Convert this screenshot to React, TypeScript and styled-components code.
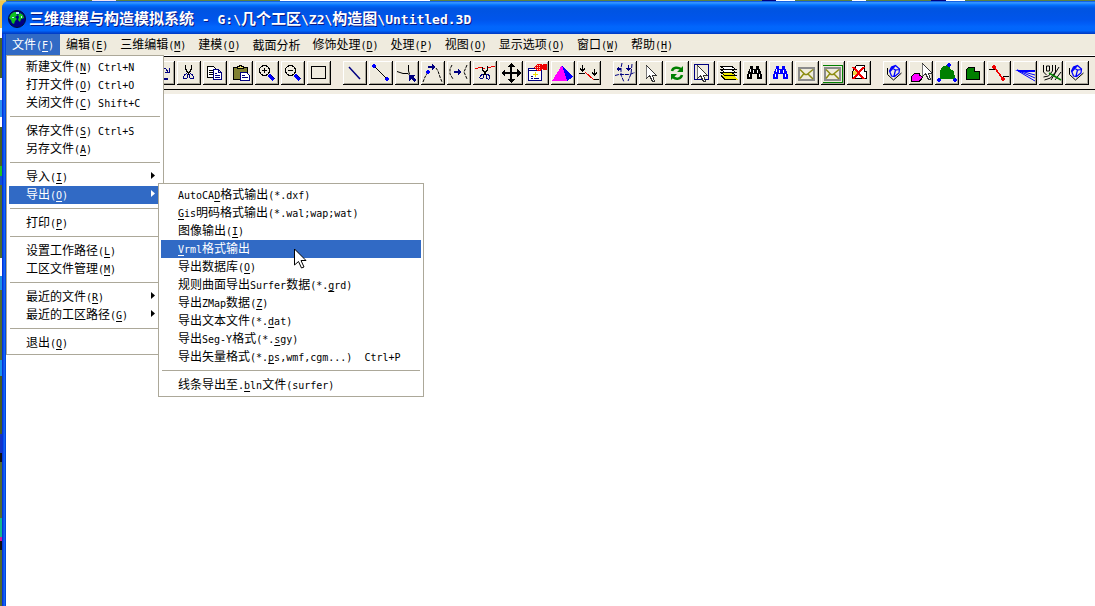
import React from "react";
import styled, { createGlobalStyle, css } from "styled-components";

const GlobalStyle = createGlobalStyle`
  * { box-sizing: border-box; }
  body {
    margin: 0;
    font-family: "Noto Sans CJK SC", sans-serif;
    font-size: 12px;
    line-height: 18px;
    color: #000;
  }
  button { font: inherit; color: inherit; margin: 0; }
`;

const FACE = "#efebde";
const SELECT = "#316ac5";

/* ---------- text ---------- */

const Latin = styled.span<{ $size: number }>`
  font-family: "DejaVu Sans Mono", "Liberation Mono", monospace;
  font-size: ${(p) => p.$size}px;
`;

const Key = styled.u`
  text-underline-offset: 2px;
  text-decoration-thickness: 1px;
`;

/* Half-width runs get a monospace face; "&" marks the access key. */
function Label({ text, size = 10 }: { text: string; size?: number }) {
  const runs = text.match(/[\x00-\x7f]+|[^\x00-\x7f]+/g) || [];
  return (
    <span>
      {runs.map((run, i) => {
        if (run.charCodeAt(0) > 127) return run;
        const at = run.indexOf("&");
        return (
          <Latin key={i} $size={size}>
            {at < 0 ? run : (
              <>
                {run.slice(0, at)}
                <Key>{run[at + 1]}</Key>
                {run.slice(at + 2)}
              </>
            )}
          </Latin>
        );
      })}
    </span>
  );
}

/* ---------- frame ---------- */

const Desktop = styled.div`
  min-height: 100vh;
  display: flex;
  padding: 1px 0 0 2px;
  overflow: hidden;
  background:
    linear-gradient(90deg, #e8d070 0 6px, #5c8040 6px 92px, #f4e4f0 92px 116px, #5c8040 116px 280px, #fff 280px 430px, #5c8040 430px 762px, #00007c 762px 776px, #fff 776px 795px, #5c8040 795px 852px, #fff 852px 866px, #5c8040 866px 931px, #00007c 931px 946px, #fff 946px 965px, #5c8040 965px) 0 0 / 100% 1px no-repeat,
    linear-gradient(#f0c850 0 28px, #fff 28px 38px, #4c6424 38px 78px, #e8f0ff 78px 100px, #2c90ee 100px 117px, #fff 117px 127px, #466020 127px 166px, #20c020 166px 176px, #1050d0 176px 185px, #4e6c2c 185px 258px, #fff 258px 276px, #2090e0 276px 290px, #526c2c 290px 360px, #1890e8 360px 376px, #465c20 376px 434px, #1434c4 434px 453px, #101010 453px 462px, #526c30 462px 518px, #10b890 518px 537px, #d01898 537px 541px, #101010 541px 550px, #526c2c 550px);
`;

const Window = styled.main`
  flex: 1;
  min-width: 0;
  display: flex;
  flex-direction: column;
  padding-left: 4px;
  border-top-left-radius: 7px;
  overflow: hidden;
  background: linear-gradient(90deg, #0831d9 0 1px, #0a50ea 1px 2px, #1464f4 2px 3px, #0048dc 3px 4px);
`;

const TitleBar = styled.header`
  height: 33px;
  margin-left: -4px;
  padding: 3px 0 0 6px;
  display: flex;
  align-items: center;
  gap: 3px;
  background: linear-gradient(#0046d8 0, #3593ff 4%, #288eff 7%, #127dff 10%, #036ffc 13%, #0262ee 17%, #0057e5 22%, #0054e3 30%, #0055eb 56%, #005bf5 66%, #0266fc 78%, #0066fc 90%, #0050e0 94%, #0038c0 100%);
`;

const Title = styled.h1`
  margin: 0;
  font-size: 15px;
  line-height: 20px;
  font-weight: 700;
  color: #fff;
  white-space: pre;
  text-shadow: 1px 1px 0 #0a1883;
`;

const MenuBar = styled.nav`
  height: 22px;
  display: flex;
  background: ${FACE};
  border-bottom: 1px solid #fff;
`;

const MenuSlot = styled.div`
  position: relative;
  display: flex;
`;

const MenuHead = styled.button<{ $open?: boolean }>`
  height: 21px;
  padding: 0 6px;
  border: 0;
  white-space: pre;
  background: ${(p) => (p.$open ? SELECT : "transparent")};
  color: ${(p) => (p.$open ? "#fff" : "#000")};
`;

const Popup = styled.div<{ $nested?: boolean }>`
  position: absolute;
  z-index: 2;
  padding: 2px;
  border: 1px solid #aca899;
  background: #fff;
  color: #000;
  ${(p) =>
    p.$nested
      ? css`
          top: -3px;
          left: 100%;
          margin-left: -3px;
          width: 266px;
        `
      : css`
          top: 21px;
          left: 0;
          width: 158px;
        `}
`;

const ItemSlot = styled.div`
  position: relative;
`;

const Item = styled.button<{ $active?: boolean }>`
  width: 100%;
  height: 18px;
  padding: 0 6px 0 17px;
  border: 0;
  display: flex;
  align-items: center;
  justify-content: space-between;
  white-space: pre;
  text-align: left;
  background: ${(p) => (p.$active ? SELECT : "transparent")};
  color: ${(p) => (p.$active ? "#fff" : "#000")};
`;

const SubArrow = styled.svg`
  margin-bottom: 3px;
`;

const Rule = styled.hr`
  height: 1px;
  margin: 4px 1px 5px;
  border: 0;
  background: #aca899;
`;

const ToolBar = styled.div`
  height: 34px;
  padding: 4px 0 0 5px;
  display: flex;
  gap: 12px;
  background: #f0eadf;
  border-top: 1px solid #000;
  border-bottom: 1px solid #000;
`;

const ToolGroup = styled.div`
  display: flex;
  gap: 2px;
`;

const Tool = styled.button`
  flex: none;
  width: 24px;
  height: 24px;
  padding: 0;
  border: 0;
  background: ${FACE};
  box-shadow: inset -1px -1px #000, inset 1px 1px #fff, inset -2px -2px #a8a498;
  svg { display: block; }
`;

const Canvas = styled.section`
  flex: 1;
  border-top: 4px solid #f2eee4;
  background: #fff;
`;

const Pointer = styled.svg`
  position: absolute;
  left: 135px;
  top: 64px;
  z-index: 3;
  pointer-events: none;
`;

/* ---------- icons ---------- */

const B = "#000";
const N = "#000080";
const U = "#0000ff";
const R = "#f00000";
const G = "#008000";

const L = ({ d, c = B, w = 1, f = "none", dash }: { d: string; c?: string; w?: number; f?: string; dash?: string }) => (
  <path d={d} stroke={c} strokeWidth={w} fill={f} strokeDasharray={dash} />
);
const F = ({ d, c = B }: { d: string; c?: string }) => <path d={d} fill={c} />;
const Dot = ({ x, y, c = U }: { x: number; y: number; c?: string }) => (
  <F c={c} d={`M${x - 1} ${y - 2}h2v1h1v2h-1v1h-2v-1h-1v-2h1z`} />
);
const Smooth = ({ children }: { children: React.ReactNode }) => <g shapeRendering="geometricPrecision">{children}</g>;

const lens = (
  <>
    <circle cx="9.500" cy="9.500" r="5" fill="none" stroke={B} />
    <L d="M7 9.500h5" />
    <L d="M14 14l5 5" c={U} w={3} />
    <L d="M16 14l4 4" c={N} />
  </>
);
const binoculars = (c: string) => (
  <>
    <F c={c} d="M7 5h3v3h3V5h3v3h1v2h1v3h1v5h-5v-5h-5v5H4v-5h1v-3h1V8h1z" />
    <path d="M7.500 8v3M6.500 13v3M10.500 9v3M14.500 9v3M16.500 13v3" stroke="#fff" />
  </>
);
const envelope = (
  <>
    <path d="M4 7h15v12H4z" stroke="#8c8c8c" strokeWidth="2" fill="#f0ecdc" />
    <Smooth>
      <L d="M5 8.500l5 5h2l6-5M5 17.500l4-5M13 13l5 5" c="#8c8c10" w={1.500} />
    </Smooth>
  </>
);
const gem = (
  <Smooth>
    <L d="M4.500 7v6.500l6 5.500 8-7" />
    <L d="M6.500 10l2-4 4-1.500 4 3.500-.5 4-4.500 3.500-3-.5zM8.500 6.500l4 2.500 3.500-.500M12.500 9l-1.500 6M7 10.500l5-5.500" c={U} w={1.250} />
  </Smooth>
);
const cursorShape = (x: number, y: number) => (
  <g transform={`translate(${x} ${y})`}>
    <path d="M.5.5v13l3-3 3 6h2l-2-6h4z" fill="#fff" stroke="#333" />
    <path d="M.5 1v12" stroke="#777" />
  </g>
);

const icons: Record<string, React.ReactNode> = {
  新建: <L d="M6.500 4.500h8l3 3v12h-11z" f="#fff" />,
  打开: <L d="M4.500 18.500v-11h5l2 2h6v9z" f="#e8d858" />,
  保存: <L d="M5.500 5.500h13v13h-13zM8.500 5.500v5h7v-5M8.500 18.500v-5h7v5" c={N} />,
  打印: <L d="M4.500 10.500h15v7h-15zM7.500 10.500v-5h9v5" />,
  撤销: <L d="M7 9c5-3 10 0 8 6M7 6v4h4" c={N} w={2} />,
  重做: (
    <>
      <L d="M9 9c3-4 6-2 8 2M18 7v4h-4" c={N} />
      <F d="M8 17h9v2H8z" c={N} />
    </>
  ),
  剪切: (
    <>
      <L d="M8.500 4v4l4 6M14.500 4v4l-4 6" w={1.500} />
      <L d="M10 13c-3-1-5 5-2 5s3-3 2-5zM13 13c3-1 5 5 2 5s-3-3-2-5z" c={N} />
    </>
  ),
  复制: (
    <>
      <L d="M4.500 5.500h6l3 3v8h-9zM6 9.500h4M6 11.500h5M6 13.500h4" f="#fff" />
      <L d="M10.500 8.500h5l3 3v7h-8zM15.500 8.500v3h3M12 12.500h2M12 14.500h5M12 16.500h5" c={N} f="#fff" />
    </>
  ),
  粘贴: (
    <>
      <L d="M4.500 6.500h14v12h-14z" f="#808030" />
      <L d="M8.500 7.500v-2h2v-1h2v1h2v2z" f="#e8e060" />
      <L d="M11.500 11.500h6l3 3v5h-9zM13 14.500h3M13 16.500h6" c={N} f="#fff" />
    </>
  ),
  放大: (
    <>
      {lens}
      <L d="M9.500 7v5" />
    </>
  ),
  缩小: lens,
  窗口: <L d="M4.500 5.500h14v12h-14z" />,
  直线: (
    <Smooth>
      <L d="M6 6l11 12" c={N} w={1.500} />
    </Smooth>
  ),
  线段: (
    <>
      <L d="M5 5l13 13" />
      <Dot x={5} y={5} />
      <Dot x={18} y={18} />
    </>
  ),
  交点: (
    <>
      <Smooth>
        <L d="M2 10.500l6 2h5l2 2M13.500 4v6l1 3" />
      </Smooth>
      <F c={N} d="M14 14h6l-2 2 3 3-2 2-3-3-2 2z" />
    </>
  ),
  移点: (
    <>
      <Smooth>
        <L d="M2 21l2-5 3-5M15 7l2 3 2 6 2 5" dash="3 1" />
      </Smooth>
      <F c={N} d="M7 5h4V3l4 3-4 3V7H7z" />
      <Dot x={7} y={11} />
    </>
  ),
  连接: (
    <>
      <Smooth>
        <L d="M5 4l-2 4v5l3 5M20 4l-3 7 3 7" dash="3 1" />
      </Smooth>
      <F c={N} d="M7 10h4V8l4 3-4 3v-2H7z" />
    </>
  ),
  断开: (
    <>
      <L d="M2 7.500l6-1 4 1M15 6.500l7-1" c={R} />
      <L d="M9.500 6v3l4 5M14.500 5v4l-4 5" w={1.500} />
      <L d="M10 14c-3-1-4 4-2 4s3-2 2-4zM13 14c3-2 5 3 3 4s-3-2-3-4z" c={N} />
    </>
  ),
  平移: <F d="M12 2l4 4h-3v5h5V8l4 4-4 4v-3h-5v5h3l-4 4-4-4h3v-5H6v3l-4-4 4-4v3h5V6H8z" />,
  属性: (
    <>
      <L d="M3.500 7.500h13v12h-13zM4 9.500h12" c={N} f="#fff" />
      <L d="M6 15.500h2M6 17.500h2M9 17.500h5" c={N} />
      <L d="M10.500 11v5M8 13.500h5" c="#f0e000" />
      <F c={R} d="M8 7l4-4h5v1h1V3h4v6h-4V8h-1l-2 2h-3l-1-2z" />
      <path d="M10 6.500h6M12 4.500h4M12 8.500h3" stroke="#f8d0b8" strokeDasharray="1 1" />
    </>
  ),
  三维: (
    <>
      <F c="#ff00ff" d="M1 20L11 4l5 16z" />
      <F c={U} d="M11 4l11 12-6 4z" />
    </>
  ),
  断层: (
    <>
      <L d="M2 12.500h6M16 18.500h6" />
      <L d="M8 11l9 8" c={R} />
      <L d="M5.500 4v6M3 7.500l2.500 2.500L8 7.500M17.500 8v6M15 11.500l2.500 2.500 2.500-2.500" />
    </>
  ),
  网格: (
    <>
      <Smooth>
        <L d="M2 14.500l4-1h10l6-2M9 2l-1 5v7l3 7M19 3l-1 10-3 7" c={N} dash="4 1" />
      </Smooth>
      <F c={N} d="M3 8l3-2v1h2v2H6v1zM15 4h1v3h2l-2.500 3L13 7h2z" />
    </>
  ),
  选择: cursorShape(7, 4),
  刷新: (
    <Smooth>
      <L d="M7 10c1-4 6-4 9-2M17 14c-1 4-6 5-9 2" c={G} w={2.500} />
      <F c={G} d="M18 5v6h-6zM6 19v-6h6z" />
    </Smooth>
  ),
  框选: (
    <>
      <L d="M3.500 3.500h14v15h-14z" c={N} />
      {cursorShape(6, 4)}
    </>
  ),
  图层: (
    <>
      <F c="#f0e800" d="M4 14h13l4 5H9z" />
      <L d="M4 14.500l4 4h11" />
      <L d="M4 11.500h11l4 3H8z" f="#f0e800" />
      <L d="M4 8.500h11l4 3H8z" f="#fff" />
      <L d="M4 5.500h11l4 3H8z" f="#fff" />
    </>
  ),
  查找: binoculars(B),
  查找下一个: binoculars(U),
  消息: envelope,
  全部消息: (
    <>
      <L d="M2 4.500h19.500v17H2" c={G} />
      {envelope}
    </>
  ),
  取消打印: (
    <>
      <L d="M5.500 10.500l4-6h8v6h2v7h-14z" f="#fff" />
      <F c="#f0d840" d="M6 10h4v4H6z" />
      <L d="M6 6l11 12M17 6L6 18" c={R} w={2} />
    </>
  ),
  曲面: gem,
  选区: (
    <>
      <L d="M2.500 20.500v-5l3-3h5v2l3 1-1 3-2 1v1z" f="#ff00ff" />
      {cursorShape(13, 2)}
    </>
  ),
  编辑区: (
    <>
      <F c={G} d="M5 18V10l3-5 6-1 1 4 4 2 1 8z" />
      <Dot x={14} y={4} />
      <Dot x={4} y={19} />
      <Dot x={20} y={19} />
    </>
  ),
  区域: <L d="M5.500 18.500v-10l2-2h6v4h5v8z" f={G} />,
  断线: (
    <>
      <L d="M2 8.500h6M16 15.500h6" />
      <L d="M7 6l9 12" c={R} w={1.500} />
      <Dot x={7} y={6} c={R} />
      <Dot x={16} y={18} c={R} />
    </>
  ),
  扇形: (
    <Smooth>
      <F c={U} d="M2 9h20v2H7z" />
      <L d="M4 9l18 5M4 9l18 8M5 10l17 10" c={U} />
    </Smooth>
  ),
  等值线: (
    <Smooth>
      <L d="M4.500 4v7l3 3M7.500 5v5h3V5zM13.500 4v6l-4 5-5 1M16.500 4v7l-5 6-6 2M20 6l-8 13M22 11l-6 8" />
      <L d="M10 12l12 7" c={G} w={1.500} />
    </Smooth>
  ),
  曲面二: gem,
};

const toolGroups: string[][] = [
  ["新建", "打开", "保存"],
  ["打印", "撤销", "重做", "剪切", "复制", "粘贴", "放大", "缩小", "窗口"],
  ["直线", "线段", "交点", "移点", "连接", "断开", "平移", "属性", "三维", "断层"],
  ["网格", "选择", "刷新", "框选", "图层", "查找", "查找下一个", "消息", "全部消息", "取消打印"],
  ["曲面", "选区", "编辑区", "区域", "断线", "扇形", "等值线", "曲面二"],
];

/* ---------- menus ---------- */

const heads = ["编辑(&E)", "三维编辑(&M)", "建模(&O)", "截面分析", "修饰处理(&D)", "处理(&P)", "视图(&O)", "显示选项(&O)", "窗口(&W)", "帮助(&H)"];

const fileMenu = [
  "新建文件(&N) Ctrl+N", "打开文件(&O) Ctrl+O", "关闭文件(&C) Shift+C", "-",
  "保存文件(&S) Ctrl+S", "另存文件(&A)", "-",
  "导入(&I)>", "导出(&O)>", "-",
  "打印(&P)", "-",
  "设置工作路径(&L)", "工区文件管理(&M)", "-",
  "最近的文件(&R)>", "最近的工区路径(&G)>", "-",
  "退出(&Q)",
];

const exportMenu = [
  "AutoCA&D格式输出(*.dxf)", "&Gis明码格式输出(*.wal;wap;wat)", "图像输出(&I)", "&Vrml格式输出",
  "导出数据库(&O)", "规则曲面导出Surfer数据(*.&grd)", "导出ZMap数据(&Z)", "导出文本文件(*.&dat)",
  "导出Seg-Y格式(*.&sgy)", "导出矢量格式(*.&ps,wmf,cgm...)  Ctrl+P", "-",
  "线条导出至.&bln文件(surfer)",
];

function MenuItems({ items, active, children }: { items: string[]; active: number; children?: React.ReactNode }) {
  return (
    <>
      {items.map((text, i) =>
        text === "-" ? (
          <Rule key={i} />
        ) : (
          <ItemSlot key={i}>
            <Item type="button" role="menuitem" $active={i === active}>
              <Label text={text.replace(">", "")} />
              {text.endsWith(">") && (
                <SubArrow width="4" height="7" viewBox="0 0 4 7" aria-hidden="true">
                  <path d="M0 0l4 3.500L0 7z" fill="currentColor" />
                </SubArrow>
              )}
            </Item>
            {i === active && children}
          </ItemSlot>
        )
      )}
    </>
  );
}

export default function App() {
  return (
    <Desktop>
      <GlobalStyle />
      <Window>
        <TitleBar>
          <svg width="18" height="18" viewBox="0 0 18 18" aria-hidden="true">
            <circle cx="9" cy="9" r="8.500" fill="#000084" stroke="#001030" />
            <path d="M1 8l2-4 3-2h3l-1 2 2 1-3 2 2 2-2 2-1 3-2-1-1-3zM10 5l2-2 3 2 1 3-3 1-1 3-2-2 1-3z" fill="#10c020" />
            <path d="M8 2h3v2H8zM4 7h2v1H4zM13 6h1v2h-1z" fill="#b8f0ff" />
          </svg>
          <Title>
            <Label size={13} text={"三维建模与构造模拟系统 - G:\\几个工区\\Z2\\构造图\\Untitled.3D"} />
          </Title>
        </TitleBar>
        <MenuBar>
          <MenuSlot>
            <MenuHead type="button" $open>
              <Label text="文件(&F)" />
            </MenuHead>
            <Popup role="menu">
              <MenuItems items={fileMenu} active={8}>
                <Popup role="menu" $nested>
                  <MenuItems items={exportMenu} active={3} />
                  <Pointer width="13" height="21" viewBox="0 0 13 21" aria-hidden="true">
                    <path d="M.5 1v16l4-3.500 3 6.500 2.500-1-3-6.500h5z" fill="#fff" stroke="#000" />
                  </Pointer>
                </Popup>
              </MenuItems>
            </Popup>
          </MenuSlot>
          {heads.map((h) => (
            <MenuHead type="button" key={h}>
              <Label text={h} />
            </MenuHead>
          ))}
        </MenuBar>
        <ToolBar role="toolbar">
          {toolGroups.map((group, g) => (
            <ToolGroup key={g}>
              {group.map((name) => (
                <Tool type="button" key={name} aria-label={name}>
                  <svg width="24" height="24" viewBox="0 0 24 24" shapeRendering="crispEdges" aria-hidden="true">
                    {icons[name]}
                  </svg>
                </Tool>
              ))}
            </ToolGroup>
          ))}
        </ToolBar>
        <Canvas />
      </Window>
    </Desktop>
  );
}
